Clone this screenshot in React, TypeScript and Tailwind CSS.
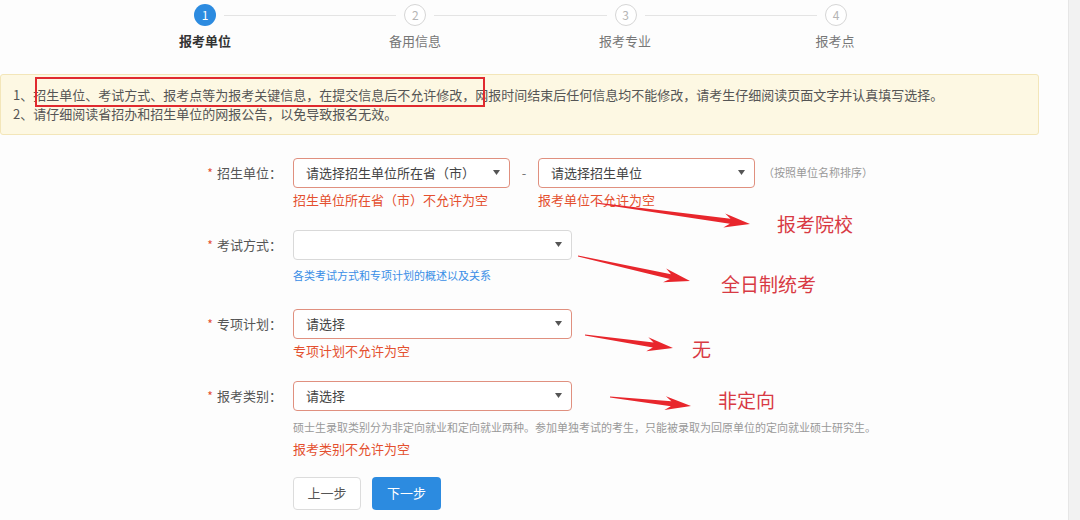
import React from "react";

const font = { fontFamily: '"Noto Sans CJK SC", "Microsoft YaHei", sans-serif' };

function Caret() {
  return (
    <svg width="7" height="5" viewBox="0 0 7 5">
      <polygon points="0,0 7,0 3.5,5" fill="#555" />
    </svg>
  );
}

function Select({ text, w, error }: { text: string; w: string; error?: boolean }) {
  return (
    <div
      className={`${w} h-[30px] flex items-center justify-between pl-[12px] pr-[9px] rounded-[4px] border bg-white text-[13px] text-[#444] ${
        error ? "border-[#e0907f]" : "border-[#d9d9d9]"
      }`}
    >
      <span>{text}</span>
      <Caret />
    </div>
  );
}

function Label({ text }: { text: string }) {
  return (
    <div className="w-[282px] shrink-0 flex justify-end items-center h-[30px] text-[13px] text-[#555]">
      <span className="text-[#e4502f] mr-[4px] text-[12px]">*</span>
      {text}：
    </div>
  );
}

function Arrow({ x1, y1, x2, y2 }: { x1: number; y1: number; x2: number; y2: number }) {
  const dx = x2 - x1;
  const dy = y2 - y1;
  const len = Math.sqrt(dx * dx + dy * dy);
  const ux = dx / len;
  const uy = dy / len;
  const px = -uy;
  const py = ux;
  const hl = 26;
  const hw = 7;
  const bx = x2 - ux * hl;
  const by = y2 - uy * hl;
  const nx = x2 - ux * (hl - 6);
  const ny = y2 - uy * (hl - 6);
  const pts = [
    [x1 + px * 0.4, y1 + py * 0.4],
    [nx + px * 2.5, ny + py * 2.5],
    [bx + px * hw, by + py * hw],
    [x2, y2],
    [bx - px * hw, by - py * hw],
    [nx - px * 2.5, ny - py * 2.5],
    [x1 - px * 0.4, y1 - py * 0.4],
  ]
    .map((p) => p.join(","))
    .join(" ");
  return <polygon points={pts} fill="#e8262c" />;
}

export default function App() {
  const steps = ["报考单位", "备用信息", "报考专业", "报考点"];
  return (
    <div className="w-[1080px] h-[520px] bg-white flex overflow-hidden relative" style={font}>
      <div className="w-[1068px] bg-[#fdfdfd] flex flex-col">
        {/* stepper */}
        <div className="pt-[4px] ml-[194px] w-[653px] flex items-center">
          <div className="w-[22px] h-[22px] rounded-full bg-[#2c8be0] text-white text-[12px] flex items-center justify-center">1</div>
          {[2, 3, 4].map((n) => (
            <React.Fragment key={n}>
              <div className="flex-1 h-px bg-[#e4e4e4] mx-[8px]" />
              <div className="w-[22px] h-[22px] rounded-full border-[1.5px] border-[#d6d6d6] text-[#b5b5b5] text-[12px] flex items-center justify-center bg-white">
                {n}
              </div>
            </React.Fragment>
          ))}
        </div>
        <div className="ml-[100px] w-[840px] grid grid-cols-4 mt-[5px] text-[13px]">
          {steps.map((s, i) => (
            <div key={s} className={`text-center ${i === 0 ? "text-[#333] font-bold" : "text-[#777]"}`}>
              {s}
            </div>
          ))}
        </div>

        {/* notice */}
        <div className="mt-[23px] w-[1039px] h-[61px] bg-[#fdf8e3] border border-[#f3e6b9] rounded-[3px] pl-[12px] pt-[10px] text-[13px] leading-[19px] text-[#555]">
          <div>1、招生单位、考试方式、报考点等为报考关键信息，在提交信息后不允许修改，网报时间结束后任何信息均不能修改，请考生仔细阅读页面文字并认真填写选择。</div>
          <div>2、请仔细阅读省招办和招生单位的网报公告，以免导致报名无效。</div>
        </div>

        {/* form */}
        <div className="mt-[23px] flex flex-col">
          <div className="flex">
            <Label text="招生单位" />
            <div className="ml-[11px] flex flex-col">
              <div className="flex items-center">
                <Select text="请选择招生单位所在省（市）" w="w-[217px]" error />
                <span className="w-[28px] text-center text-[#777] text-[13px]">-</span>
                <Select text="请选择招生单位" w="w-[217px]" error />
                <span className="ml-[8px] text-[11px] text-[#999]">（按照单位名称排序）</span>
              </div>
              <div className="flex text-[13px] text-[#e4502f] mt-[3px] leading-[18px]">
                <span className="w-[245px]">招生单位所在省（市）不允许为空</span>
                <span>报考单位不允许为空</span>
              </div>
            </div>
          </div>

          <div className="flex mt-[21px]">
            <Label text="考试方式" />
            <div className="ml-[11px] flex flex-col">
              <Select text="" w="w-[279px]" />
              <div className="text-[11px] text-[#3a8ee6] mt-[7px] leading-[16px]">各类考试方式和专项计划的概述以及关系</div>
            </div>
          </div>

          <div className="flex mt-[26px]">
            <Label text="专项计划" />
            <div className="ml-[11px] flex flex-col">
              <Select text="请选择" w="w-[279px]" error />
              <div className="text-[13px] text-[#e4502f] mt-[3px] leading-[18px]">专项计划不允许为空</div>
            </div>
          </div>

          <div className="flex mt-[21px]">
            <Label text="报考类别" />
            <div className="ml-[11px] flex flex-col">
              <Select text="请选择" w="w-[279px]" error />
              <div className="text-[11px] text-[#999] mt-[8px] leading-[16px]">
                硕士生录取类别分为非定向就业和定向就业两种。参加单独考试的考生，只能被录取为回原单位的定向就业硕士研究生。
              </div>
              <div className="text-[13px] text-[#e4502f] mt-[5px] leading-[18px]">报考类别不允许为空</div>
            </div>
          </div>

          <div className="flex ml-[293px] mt-[19px] gap-[11px]">
            <button className="w-[68px] h-[33px] border border-[#dcdcdc] rounded-[4px] bg-white text-[13px] text-[#555]">上一步</button>
            <button className="w-[69px] h-[33px] rounded-[4px] bg-[#2c8be0] text-[13px] text-white">下一步</button>
          </div>
        </div>
      </div>
      <div className="w-[12px] bg-[#f2f2f2] border-l border-[#e6e6e6]" />

      {/* annotations overlay */}
      <div className="absolute left-[35px] top-[77px] w-[450px] h-[30px] border-2 border-[#e02a2f]" />
      <svg className="absolute left-0 top-0 pointer-events-none" width="1080" height="520">
        <Arrow x1={596} y1={203} x2={750} y2={224} />
        <Arrow x1={578} y1={256} x2={690} y2={281} />
        <Arrow x1={585} y1={335} x2={673} y2={348} />
        <Arrow x1={610} y1={397} x2={691} y2={406} />
      </svg>
      <div className="absolute left-[777px] top-[211px] text-[19px] text-[#d83a44] leading-[26px]">报考院校</div>
      <div className="absolute left-[721px] top-[271px] text-[19px] text-[#d83a44] leading-[26px]">全日制统考</div>
      <div className="absolute left-[692px] top-[336px] text-[19px] text-[#d83a44] leading-[26px]">无</div>
      <div className="absolute left-[718px] top-[387px] text-[19px] text-[#d83a44] leading-[26px]">非定向</div>
    </div>
  );
}
